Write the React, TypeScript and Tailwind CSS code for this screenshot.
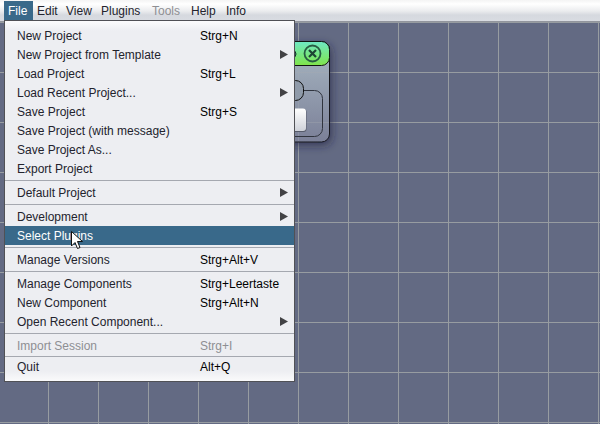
import React from "react";

type Entry = { label: string; keys?: string; sub?: boolean; state?: "active" | "disabled" };

const groups: Entry[][] = [
  [
    { label: "New Project", keys: "Strg+N" },
    { label: "New Project from Template", sub: true },
    { label: "Load Project", keys: "Strg+L" },
    { label: "Load Recent Project...", sub: true },
    { label: "Save Project", keys: "Strg+S" },
    { label: "Save Project (with message)" },
    { label: "Save Project As..." },
    { label: "Export Project" },
  ],
  [{ label: "Default Project", sub: true }],
  [
    { label: "Development", sub: true },
    { label: "Select Plugins", state: "active" },
  ],
  [{ label: "Manage Versions", keys: "Strg+Alt+V" }],
  [
    { label: "Manage Components", keys: "Strg+Leertaste" },
    { label: "New Component", keys: "Strg+Alt+N" },
    { label: "Open Recent Component...", sub: true },
  ],
  [{ label: "Import Session", keys: "Strg+I", state: "disabled" }],
];

const menus = [
  { name: "File", look: "w-[29px] bg-[#39698a] text-white" },
  { name: "Edit", look: "w-[29px] text-[#23232d]" },
  { name: "View", look: "w-[35px] text-[#23232d]" },
  { name: "Plugins", look: "w-[51px] text-[#23232d]" },
  { name: "Tools", look: "w-[39px] text-[#8e8f93]" },
  { name: "Help", look: "w-[35px] text-[#23232d]" },
  { name: "Info", look: "w-[29px] text-[#23232d]" },
];

function MenuRow({ label, keys, sub, state }: Entry) {
  const tone =
    state === "active"
      ? "bg-[#39698a] text-white"
      : state === "disabled"
        ? "text-[#8e8f93]"
        : "text-[#23232d]";
  return (
    <button
      type="button"
      role="menuitem"
      disabled={state === "disabled"}
      className={`flex h-[19px] w-full items-start pl-3 pr-1.5 text-left leading-[21px] ${tone}`}
    >
      <span className="w-[183px] whitespace-nowrap">{label}</span>
      {keys && <span className={state === "disabled" ? "" : "text-black"}>{keys}</span>}
      {sub && (
        <svg className="ml-auto self-center" width="8" height="9" viewBox="0 0 8 9" aria-hidden="true">
          <path d="M0 0L8 4.5L0 9Z" fill="#424245" />
        </svg>
      )}
    </button>
  );
}

function FileMenu() {
  return (
    <div
      role="menu"
      aria-label="File"
      className="absolute left-1 top-5 z-10 w-[291px] border border-[#505156] bg-[linear-gradient(#fcfcfd,#edeef2_10px,#edeef2_calc(100%-10px),#fafafb)] py-[5px]"
    >
      {groups.map((group, i) => (
        <React.Fragment key={i}>
          {i > 0 && <hr className="my-0.5 border-[#a5a8b0]" />}
          {group.map((entry) => (
            <MenuRow key={entry.label} {...entry} />
          ))}
        </React.Fragment>
      ))}
      <hr className="mt-px border-[#a5a8b0]" />
      <MenuRow label="Quit" keys="Alt+Q" />
    </div>
  );
}

function MenuBar() {
  return (
    <nav className="flex h-[22px] items-start border-b border-[#92959d] bg-[linear-gradient(#f4f4f4,#ffffff_4px,#ebecee_11px,#d6d9df_15px,#d9dce2)] pl-1 pt-px">
      {menus.map(({ name, look }) => (
        <button
          key={name}
          type="button"
          disabled={name === "Tools"}
          className={`flex h-[19px] items-start whitespace-nowrap px-1 leading-[21px] ${look}`}
        >
          {name}
        </button>
      ))}
    </nav>
  );
}

function ComponentNode() {
  return (
    <svg className="absolute left-[230px] top-[19px]" width="120" height="124" viewBox="230 41 120 124" overflow="visible" aria-hidden="true">
      <defs>
        <linearGradient id="body" x1="0" y1="0" x2="0" y2="1">
          <stop offset="0" stopColor="#a9b8c3" />
          <stop offset="1" stopColor="#7b8098" />
        </linearGradient>
        <linearGradient id="head" x1="0" y1="0" x2="0" y2="1">
          <stop offset="0" stopColor="#6fe8c4" />
          <stop offset="1" stopColor="#7fe44a" />
        </linearGradient>
        <linearGradient id="box" x1="0" y1="0" x2="0" y2="1">
          <stop offset="0" stopColor="#ffffff" />
          <stop offset="1" stopColor="#cfd2da" />
        </linearGradient>
        <filter id="shade" x="-20%" y="-20%" width="150%" height="150%">
          <feDropShadow dx="2" dy="3" stdDeviation="4" floodColor="#20243a" floodOpacity="0.6" />
        </filter>
      </defs>
      <rect x="232" y="41.5" width="97.5" height="100.5" rx="8" fill="url(#body)" stroke="#14161c" filter="url(#shade)" />
      <path d="M298.5 66V141M290 72.5H329M290 122.5H329" stroke="#a6abb1" strokeOpacity="0.35" />
      <path d="M232 41.5H321.5A8 8 0 0 1 329.5 49.5V57.5A8 8 0 0 1 321.5 65.5H232Z" fill="url(#head)" stroke="#101510" />
      <circle cx="292.5" cy="54" r="3.5" fill="#2f9c86" stroke="#142c24" />
      <circle cx="312.5" cy="53.5" r="8" fill="none" stroke="#285c43" strokeWidth="1.8" />
      <path d="M309 50L316 57M316 50L309 57" stroke="#1d4434" strokeWidth="2.2" />
      <path d="M290 90.5H314.5A8 8 0 0 1 322.5 98.5V128.5A8 8 0 0 1 314.5 136.5H290" fill="none" stroke="#30343e" />
      <rect x="270" y="80.5" width="33.5" height="20" rx="8" fill="#8f9aa9" stroke="#111" />
      <rect x="270" y="109" width="36.5" height="23" rx="3" fill="#565b6a" />
      <rect x="270" y="108.5" width="36" height="22.5" rx="3" fill="url(#box)" />
    </svg>
  );
}

export default function App() {
  return (
    <div className="relative flex h-screen flex-col overflow-hidden font-['Liberation_Sans',Arial,sans-serif] text-[12px]">
      <MenuBar />
      <main className="relative grow bg-[#636a83] bg-[linear-gradient(#979ca1_1px,transparent_1px),linear-gradient(90deg,#979ca1_1px,transparent_1px)] bg-[size:50px_50px] bg-[position:48px_0]">
        <ComponentNode />
      </main>
      <FileMenu />
      <svg className="absolute left-[71px] top-[231px] z-20" width="13" height="20" viewBox="0 0 13 20" aria-hidden="true">
        <path d="M0.5 0.5V15L4 11.5L6.5 17.5L9 16.5L6.5 10.5H11.5Z" fill="#fff" stroke="#111" />
      </svg>
    </div>
  );
}
